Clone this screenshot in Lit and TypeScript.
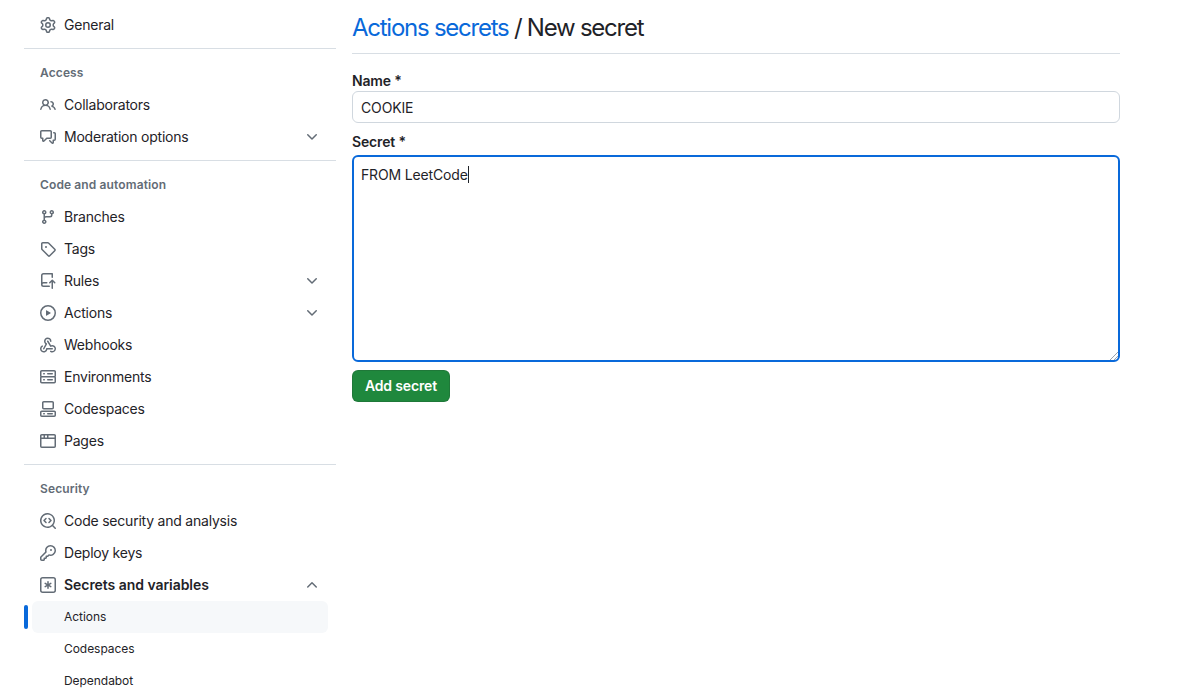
import { LitElement, html, css, svg } from "lit";
import { customElement } from "lit/decorators.js";

const ICONS: Record<string, string[]> = {
  gear: ["M8 0a8.2 8.2 0 0 1 .701.031C9.444.095 9.99.645 10.16 1.29l.288 1.107c.018.066.079.158.212.224.231.114.454.243.668.386.123.082.233.09.299.071l1.103-.303c.644-.176 1.392.021 1.82.63.27.385.506.792.704 1.218.315.675.111 1.422-.364 1.891l-.814.806c-.049.048-.098.147-.088.294.016.257.016.515 0 .772-.01.147.038.246.088.294l.814.806c.475.469.679 1.216.364 1.891a7.977 7.977 0 0 1-.704 1.217c-.428.61-1.176.807-1.82.63l-1.102-.302c-.067-.019-.177-.011-.3.071a5.909 5.909 0 0 1-.668.386c-.133.066-.194.158-.211.224l-.29 1.106c-.168.646-.715 1.196-1.458 1.26a8.006 8.006 0 0 1-1.402 0c-.743-.064-1.289-.614-1.458-1.26l-.289-1.106c-.018-.066-.079-.158-.212-.224a5.738 5.738 0 0 1-.668-.386c-.123-.082-.233-.09-.299-.071l-1.103.303c-.644.176-1.392-.021-1.82-.63a8.12 8.12 0 0 1-.704-1.218c-.315-.675-.111-1.422.363-1.891l.815-.806c.05-.048.098-.147.088-.294a6.214 6.214 0 0 1 0-.772c.01-.147-.038-.246-.088-.294l-.815-.806C.635 6.045.431 5.298.746 4.623a7.92 7.92 0 0 1 .704-1.217c.428-.61 1.176-.807 1.82-.63l1.102.302c.067.019.177.011.3-.071.214-.143.437-.272.668-.386.133-.066.194-.158.211-.224l.29-1.106C6.009.645 6.556.095 7.299.03 7.53.01 7.764 0 8 0Zm-.571 1.525c-.036.003-.108.036-.137.146l-.289 1.105c-.147.561-.549.967-.998 1.189-.173.086-.34.183-.5.29-.417.278-.97.423-1.529.27l-1.103-.303c-.109-.03-.175.016-.195.045-.22.312-.412.644-.573.99-.014.031-.021.11.059.19l.815.806c.411.406.562.957.53 1.456a4.709 4.709 0 0 0 0 .582c.032.499-.119 1.05-.53 1.456l-.815.806c-.081.08-.073.159-.059.19.162.346.353.677.573.989.02.03.085.076.195.046l1.102-.303c.56-.153 1.113-.008 1.53.27.161.107.328.204.501.29.447.222.85.629.997 1.189l.289 1.105c.029.109.101.143.137.146a6.6 6.6 0 0 0 1.142 0c.036-.003.108-.036.137-.146l.289-1.105c.147-.561.549-.967.998-1.189.173-.086.34-.183.5-.29.417-.278.97-.423 1.529-.27l1.103.303c.109.029.175-.016.195-.045.22-.313.411-.644.573-.99.014-.031.021-.11-.059-.19l-.815-.806c-.411-.406-.562-.957-.53-1.456a4.709 4.709 0 0 0 0-.582c-.032-.499.119-1.05.53-1.456l.815-.806c.081-.08.073-.159.059-.19a6.464 6.464 0 0 0-.573-.989c-.02-.03-.085-.076-.195-.046l-1.102.303c-.56.153-1.113.008-1.53-.27a4.44 4.44 0 0 0-.501-.29c-.447-.222-.85-.629-.997-1.189l-.289-1.105c-.029-.11-.101-.143-.137-.146a6.6 6.6 0 0 0-1.142 0ZM11 8a3 3 0 1 1-6 0 3 3 0 0 1 6 0ZM9.5 8a1.5 1.5 0 1 0-3.001.001A1.5 1.5 0 0 0 9.5 8Z"],
  people: ["M2 5.5a3.5 3.5 0 1 1 5.898 2.549 5.508 5.508 0 0 1 3.034 4.084.75.75 0 1 1-1.482.235 4 4 0 0 0-7.9 0 .75.75 0 0 1-1.482-.236A5.507 5.507 0 0 1 3.102 8.05 3.493 3.493 0 0 1 2 5.5ZM11 4a3.001 3.001 0 0 1 2.22 5.018 5.01 5.01 0 0 1 2.56 3.012.749.749 0 0 1-.885.954.752.752 0 0 1-.549-.514 3.507 3.507 0 0 0-2.522-2.372.75.75 0 0 1-.574-.73v-.352a.75.75 0 0 1 .416-.672A1.5 1.5 0 0 0 11 5.5.75.75 0 0 1 11 4Zm-5.5-.5a2 2 0 1 0-.001 3.999A2 2 0 0 0 5.5 3.5Z"],
  discussion: ["M1.75 1h8.5c.966 0 1.75.784 1.75 1.75v5.5A1.75 1.75 0 0 1 10.25 10H7.061l-2.574 2.573A1.458 1.458 0 0 1 2 11.543V10h-.25A1.75 1.75 0 0 1 0 8.25v-5.5C0 1.784.784 1 1.75 1ZM1.5 2.75v5.5c0 .138.112.25.25.25h1a.75.75 0 0 1 .75.75v2.19l2.72-2.72a.749.749 0 0 1 .53-.22h3.5a.25.25 0 0 0 .25-.25v-5.5a.25.25 0 0 0-.25-.25h-8.5a.25.25 0 0 0-.25.25Zm13 2a.25.25 0 0 0-.25-.25h-.5a.75.75 0 0 1 0-1.5h.5c.966 0 1.75.784 1.75 1.75v5.5A1.75 1.75 0 0 1 14.25 12H14v1.543a1.458 1.458 0 0 1-2.487 1.03L9.22 12.28a.749.749 0 0 1 .326-1.275.749.749 0 0 1 .734.215l2.22 2.22v-2.19a.75.75 0 0 1 .75-.75h1a.25.25 0 0 0 .25-.25Z"],
  branch: ["M9.5 3.25a2.25 2.25 0 1 1 3 2.122V6A2.5 2.5 0 0 1 10 8.5H6a1 1 0 0 0-1 1v1.128a2.251 2.251 0 1 1-1.5 0V5.372a2.25 2.25 0 1 1 1.5 0v1.836A2.493 2.493 0 0 1 6 7h4a1 1 0 0 0 1-1v-.628A2.25 2.25 0 0 1 9.5 3.25Zm-6 0a.75.75 0 1 0 1.5 0 .75.75 0 0 0-1.5 0Zm8.25-.75a.75.75 0 1 0 0 1.5.75.75 0 0 0 0-1.5ZM4.25 12a.75.75 0 1 0 0 1.5.75.75 0 0 0 0-1.5Z"],
  tag: ["M1 7.775V2.75C1 1.784 1.784 1 2.75 1h5.025c.464 0 .91.184 1.238.513l6.25 6.25a1.75 1.75 0 0 1 0 2.474l-5.026 5.026a1.75 1.75 0 0 1-2.474 0l-6.25-6.25A1.752 1.752 0 0 1 1 7.775Zm1.5 0c0 .066.026.13.073.177l6.25 6.25a.25.25 0 0 0 .354 0l5.025-5.025a.25.25 0 0 0 0-.354l-6.25-6.25a.25.25 0 0 0-.177-.073H2.75a.25.25 0 0 0-.25.25ZM6 5a1 1 0 1 1 0 2 1 1 0 0 1 0-2Z"],
  repoPush: ["M1 2.5A2.5 2.5 0 0 1 3.5 0h8.75a.75.75 0 0 1 .75.75v3.5a.75.75 0 0 1-1.5 0V1.5h-8a1 1 0 0 0-1 1v6.708A2.493 2.493 0 0 1 3.5 9h3.25a.75.75 0 0 1 0 1.5H3.5a1 1 0 0 0 0 2h5.75a.75.75 0 0 1 0 1.5H3.5A2.5 2.5 0 0 1 1 11.5Zm13.23 7.79h-.001l-1.224-1.224v6.184a.75.75 0 0 1-1.5 0V9.066L10.28 10.29a.75.75 0 0 1-1.06-1.061l2.505-2.504a.75.75 0 0 1 1.06 0L15.29 9.23a.751.751 0 0 1-.018 1.042.751.751 0 0 1-1.042.018Z"],
  play: ["M8 0a8 8 0 1 1 0 16A8 8 0 0 1 8 0ZM1.5 8a6.5 6.5 0 1 0 13 0 6.5 6.5 0 0 0-13 0Zm4.879-2.773 4.264 2.559a.25.25 0 0 1 0 .428l-4.264 2.559A.25.25 0 0 1 6 10.559V5.442a.25.25 0 0 1 .379-.215Z"],
  webhook: [
    "M5.5 4.25a2.25 2.25 0 0 1 4.5 0 .75.75 0 0 0 1.5 0 3.75 3.75 0 1 0-6.14 2.889l-2.272 4.258a.75.75 0 0 0 1.324.706L7 7.25a.75.75 0 0 0-.309-1.015A2.25 2.25 0 0 1 5.5 4.25Z",
    "M7.364 3.607a.75.75 0 0 1 1.03.257l2.608 4.349a3.75 3.75 0 1 1-.628 6.785.75.75 0 0 1 .752-1.299 2.25 2.25 0 1 0-.033-3.88.75.75 0 0 1-1.03-.256L7.107 4.636a.75.75 0 0 1 .257-1.03Z",
    "M2.9 8.776A.75.75 0 0 1 2.625 9.8 2.25 2.25 0 1 0 6 11.75a.75.75 0 0 1 .75-.751h5.5a.75.75 0 0 1 0 1.5H7.425a3.751 3.751 0 1 1-5.55-3.998.75.75 0 0 1 1.024.274Z",
  ],
  server: ["M1.75 1h12.5c.966 0 1.75.784 1.75 1.75v4c0 .372-.116.717-.314 1 .198.283.314.628.314 1v4a1.75 1.75 0 0 1-1.75 1.75H1.75A1.75 1.75 0 0 1 0 12.75v-4c0-.358.109-.707.314-1a1.739 1.739 0 0 1-.314-1v-4C0 1.784.784 1 1.75 1ZM1.5 2.75v4c0 .138.112.25.25.25h12.5a.25.25 0 0 0 .25-.25v-4a.25.25 0 0 0-.25-.25H1.75a.25.25 0 0 0-.25.25Zm.25 5.75a.25.25 0 0 0-.25.25v4c0 .138.112.25.25.25h12.5a.25.25 0 0 0 .25-.25v-4a.25.25 0 0 0-.25-.25ZM7 4.75A.75.75 0 0 1 7.75 4h4.5a.75.75 0 0 1 0 1.5h-4.5A.75.75 0 0 1 7 4.75ZM7.75 10h4.5a.75.75 0 0 1 0 1.5h-4.5a.75.75 0 0 1 0-1.5ZM3 4.75A.75.75 0 0 1 3.75 4h.5a.75.75 0 0 1 0 1.5h-.5A.75.75 0 0 1 3 4.75ZM3.75 10h.5a.75.75 0 0 1 0 1.5h-.5a.75.75 0 0 1 0-1.5Z"],
  codespaces: [
    "M0 11.25c0-.966.784-1.75 1.75-1.75h12.5c.966 0 1.75.784 1.75 1.75v3A1.75 1.75 0 0 1 14.25 16H1.75A1.75 1.75 0 0 1 0 14.25Zm2-9.5C2 .784 2.784 0 3.75 0h8.5C13.216 0 14 .784 14 1.75v5a1.75 1.75 0 0 1-1.75 1.75h-8.5A1.75 1.75 0 0 1 2 6.75Zm1.75-.25a.25.25 0 0 0-.25.25v5c0 .138.112.25.25.25h8.5a.25.25 0 0 0 .25-.25v-5a.25.25 0 0 0-.25-.25Zm-2 9.5a.25.25 0 0 0-.25.25v3c0 .138.112.25.25.25h12.5a.25.25 0 0 0 .25-.25v-3a.25.25 0 0 0-.25-.25Z",
    "M7 12.75a.75.75 0 0 1 .75-.75h4.5a.75.75 0 0 1 0 1.5h-4.5a.75.75 0 0 1-.75-.75Zm-4 0a.75.75 0 0 1 .75-.75h.5a.75.75 0 0 1 0 1.5h-.5a.75.75 0 0 1-.75-.75Z",
  ],
  browser: ["M0 2.75C0 1.784.784 1 1.75 1h12.5c.966 0 1.75.784 1.75 1.75v10.5A1.75 1.75 0 0 1 14.25 15H1.75A1.75 1.75 0 0 1 0 13.25ZM14.5 6h-13v7.25c0 .138.112.25.25.25h12.5a.25.25 0 0 0 .25-.25Zm-6-3.5v2h6V2.75a.25.25 0 0 0-.25-.25ZM5 2.5v2h2v-2Zm-3.25 0a.25.25 0 0 0-.25.25V4.5h2v-2Z"],
  codescan: [
    "M8.47 4.97a.75.75 0 0 0 0 1.06L9.94 7.5 8.47 8.97a.75.75 0 1 0 1.06 1.06l2-2a.75.75 0 0 0 0-1.06l-2-2a.75.75 0 0 0-1.06 0ZM6.53 6.03a.75.75 0 0 0-1.06-1.06l-2 2a.75.75 0 0 0 0 1.06l2 2a.75.75 0 1 0 1.06-1.06L5.06 7.5l1.47-1.47Z",
    "M12.246 13.307a7.501 7.501 0 1 1 1.06-1.06l2.474 2.473a.749.749 0 0 1-.326 1.275.749.749 0 0 1-.734-.215ZM1.5 7.5a6.002 6.002 0 0 0 3.663 5.529 6.002 6.002 0 0 0 6.575-1.3A6.001 6.001 0 0 0 7.5 1.5 6 6 0 0 0 1.5 7.5Z",
  ],
  key: ["M10.5 0a5.499 5.499 0 1 1-1.288 10.848l-.932.932a.749.749 0 0 1-.53.22H7v.75a.749.749 0 0 1-.22.53l-.5.5a.749.749 0 0 1-.53.22H5v.75a.749.749 0 0 1-.22.53l-.5.5a.749.749 0 0 1-.53.22h-2A1.75 1.75 0 0 1 0 14.25v-2c0-.199.079-.389.22-.53l4.932-4.932A5.5 5.5 0 0 1 10.5 0Zm-4 5.5c-.001.431.069.86.205 1.269a.75.75 0 0 1-.181.768L1.5 12.56v1.69c0 .138.112.25.25.25h1.69l.06-.06v-1.19a.75.75 0 0 1 .75-.75h1.19l.06-.06v-1.19a.75.75 0 0 1 .75-.75h1.19l1.023-1.025a.75.75 0 0 1 .768-.18A4 4 0 1 0 6.5 5.5ZM11 6a1 1 0 1 1 0-2 1 1 0 0 1 0 2Z"],
  asterisk: [
    "M0 2.75A2.75 2.75 0 0 1 2.75 0h10.5A2.75 2.75 0 0 1 16 2.75v10.5A2.75 2.75 0 0 1 13.25 16H2.75A2.75 2.75 0 0 1 0 13.25ZM2.75 1.5c-.69 0-1.25.56-1.25 1.25v10.5c0 .69.56 1.25 1.25 1.25h10.5c.69 0 1.25-.56 1.25-1.25V2.75c0-.69-.56-1.25-1.25-1.25Z",
    "M8 4a.75.75 0 0 1 .75.75V6.7l1.69-.975a.75.75 0 0 1 .75 1.3L9.5 8l1.69.976a.75.75 0 0 1-.75 1.298L8.75 9.3v1.951a.75.75 0 0 1-1.5 0V9.299l-1.69.976a.75.75 0 0 1-.75-1.3L6.5 8l-1.69-.975a.75.75 0 0 1 .75-1.3l1.69.976V4.75A.75.75 0 0 1 8 4Z",
  ],
  down: ["M12.78 5.22a.749.749 0 0 1 0 1.06l-4.25 4.25a.749.749 0 0 1-1.06 0L3.22 6.28a.749.749 0 1 1 1.06-1.06L8 8.939l3.72-3.719a.749.749 0 0 1 1.06 0Z"],
  up: ["M3.22 10.53a.749.749 0 0 1 0-1.06l4.25-4.25a.749.749 0 0 1 1.06 0l4.25 4.25a.749.749 0 1 1-1.06 1.06L8 6.811 4.28 10.53a.749.749 0 0 1-1.06 0Z"],
};

type Row = { icon?: string; label: string; chevron?: "down" | "up"; bold?: boolean; sub?: boolean; current?: boolean };
type Group = { heading?: string; rows: Row[] };

const GROUPS: Group[] = [
  { rows: [{ icon: "gear", label: "General" }] },
  {
    heading: "Access",
    rows: [
      { icon: "people", label: "Collaborators" },
      { icon: "discussion", label: "Moderation options", chevron: "down" },
    ],
  },
  {
    heading: "Code and automation",
    rows: [
      { icon: "branch", label: "Branches" },
      { icon: "tag", label: "Tags" },
      { icon: "repoPush", label: "Rules", chevron: "down" },
      { icon: "play", label: "Actions", chevron: "down" },
      { icon: "webhook", label: "Webhooks" },
      { icon: "server", label: "Environments" },
      { icon: "codespaces", label: "Codespaces" },
      { icon: "browser", label: "Pages" },
    ],
  },
  {
    heading: "Security",
    rows: [
      { icon: "codescan", label: "Code security and analysis" },
      { icon: "key", label: "Deploy keys" },
      { icon: "asterisk", label: "Secrets and variables", chevron: "up", bold: true },
      { label: "Actions", sub: true, current: true },
      { label: "Codespaces", sub: true },
      { label: "Dependabot", sub: true },
    ],
  },
];

@customElement("app-root")
export class AppRoot extends LitElement {
  static styles = css`
    :host {
      display: block;
      height: 694px;
      overflow: hidden;
      background: #fff;
      color: #1f2328;
      font-family: Inter, "Liberation Sans", sans-serif;
      font-size: 14px;
    }
    .page {
      display: flex;
      align-items: flex-start;
      padding-left: 24px;
      gap: 16px;
    }
    .side {
      width: 312px;
      flex: none;
      padding-top: 9px;
    }
    .group + .group {
      border-top: 1px solid #d8dee4;
      margin-top: 7px;
      padding-top: 8px;
    }
    .heading {
      height: 32px;
      box-sizing: border-box;
      padding: 0 0 2px 16px;
      display: flex;
      align-items: center;
      font-size: 12px;
      font-weight: 600;
      letter-spacing: 0.12px;
      color: #636c76;
    }
    .row {
      position: relative;
      height: 32px;
      margin: 0 8px;
      padding: 0 8px;
      display: flex;
      align-items: center;
      gap: 8px;
      border-radius: 6px;
      font-size: 14px;
      letter-spacing: -0.22px;
    }
    .row.bold { font-weight: 600; letter-spacing: -0.05px; }
    .row.sub { padding-left: 32px; font-size: 12px; letter-spacing: -0.05px; }
    .row.current { background: #f6f8fa; }
    .row.current::before {
      content: "";
      position: absolute;
      left: -8px;
      top: 4px;
      width: 4px;
      height: 24px;
      border-radius: 6px;
      background: #0969da;
    }
    .label { flex: 1; padding-bottom: 2px; }
    svg.icon {
      width: 16px;
      height: 16px;
      flex: none;
      fill: #636c76;
      display: block;
    }
    .main {
      width: 768px;
      flex: none;
    }
    .title {
      margin: 0;
      height: 54px;
      box-sizing: border-box;
      padding-top: 11px;
      border-bottom: 1px solid #d8dee4;
      font-size: 24px;
      font-weight: 400;
      line-height: 34px;
      letter-spacing: -1.25px;
    }
    .title a { color: #0969da; text-decoration: none; }
    .field-label {
      display: block;
      font-size: 14px;
      font-weight: 600;
      line-height: 20px;
      letter-spacing: -0.15px;
    }
    .name-label { margin-top: 17px; }
    .secret-label { margin-top: 9px; margin-bottom: 3px; }
    .input {
      display: block;
      width: 100%;
      box-sizing: border-box;
      height: 32px;
      padding: 0 8px;
      border: 1px solid #d0d7de;
      border-radius: 6px;
      font: inherit;
      font-size: 14px;
      letter-spacing: -0.15px;
      color: #1f2328;
      background: #fff;
      outline: none;
    }
    .area {
      position: relative;
      box-sizing: border-box;
      height: 207px;
      padding: 8px 7px;
      border: 2px solid #0969da;
      border-radius: 6px;
      font-size: 14px;
      line-height: 20px;
      letter-spacing: -0.15px;
    }
    .caret {
      display: inline-block;
      width: 1px;
      height: 17px;
      background: #1f2328;
      vertical-align: -3px;
    }
    .grip {
      position: absolute;
      right: 0;
      bottom: 0;
      width: 8px;
      height: 8px;
      display: block;
      stroke: #9ba3ac;
      stroke-width: 1;
      fill: none;
    }
    .submit {
      display: block;
      margin-top: 8px;
      width: 98px;
      height: 32px;
      border: 1px solid rgba(31, 35, 40, 0.15);
      border-radius: 6px;
      background: #1f883d;
      color: #fff;
      font: inherit;
      font-size: 14px;
      font-weight: 600;
      letter-spacing: -0.15px;
      padding: 0 0 2px;
    }
  `;

  private icon(name: string) {
    return html`<svg class="icon" viewBox="0 0 16 16" aria-hidden="true">
      ${ICONS[name].map((d) => svg`<path d=${d}></path>`)}
    </svg>`;
  }

  private row(r: Row) {
    const cls = ["row", r.bold ? "bold" : "", r.sub ? "sub" : "", r.current ? "current" : ""].join(" ");
    return html`<div class=${cls}>
      ${r.icon ? this.icon(r.icon) : ""}
      <span class="label">${r.label}</span>
      ${r.chevron ? this.icon(r.chevron) : ""}
    </div>`;
  }

  render() {
    return html`<div class="page">
      <nav class="side">
        ${GROUPS.map(
          (g) => html`<div class="group">
            ${g.heading ? html`<div class="heading">${g.heading}</div>` : ""}
            ${g.rows.map((r) => this.row(r))}
          </div>`
        )}
      </nav>
      <main class="main">
        <h2 class="title"><a href="#">Actions secrets</a> / New secret</h2>
        <label class="field-label name-label">Name *</label>
        <input class="input" .value=${"COOKIE"} />
        <label class="field-label secret-label">Secret *</label>
        <div class="area" role="textbox">
          FROM LeetCode<span class="caret"></span>
          <svg class="grip" viewBox="0 0 8 8" aria-hidden="true">
            <path d="M0 8 8 0M4 8l4-4"></path>
          </svg>
        </div>
        <button class="submit">Add secret</button>
      </main>
    </div>`;
  }
}
